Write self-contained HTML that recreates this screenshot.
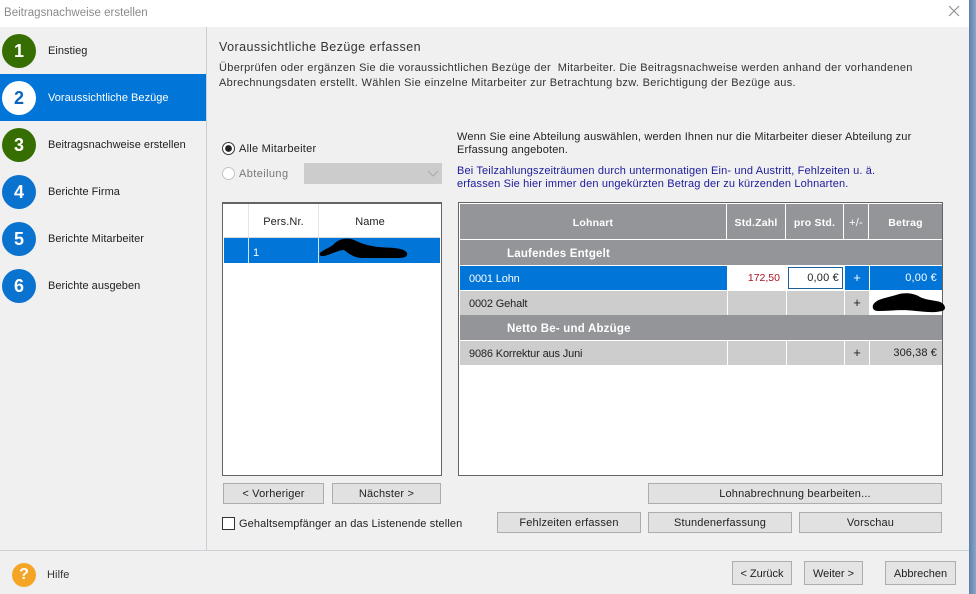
<!DOCTYPE html>
<html lang="de">
<head>
<meta charset="utf-8">
<title>Beitragsnachweise erstellen</title>
<style>
html,body{margin:0;padding:0;}
body{width:976px;height:594px;position:relative;overflow:hidden;background:#f0f0f0;font-family:"Liberation Sans",Arial,sans-serif;font-size:11px;color:#222;}
.a{position:absolute;white-space:nowrap;}
.t{position:absolute;white-space:nowrap;line-height:14px;letter-spacing:.03px;}
.circ{position:absolute;left:2px;width:34px;height:34px;border-radius:50%;color:#fff;text-align:center;font:bold 18px/35px "Liberation Sans",sans-serif;}
.g{background:#366e02;}
.b{background:#0a72cf;}
.btn{position:absolute;box-sizing:border-box;background:#e1e1e1;border:1px solid #adadad;text-align:center;font-size:11px;line-height:20px;letter-spacing:.17px;color:#222;white-space:nowrap;}
.cell{position:absolute;box-sizing:border-box;white-space:nowrap;}
.hd{background:#939598;color:#fff;font-weight:bold;text-align:center;line-height:38px;font-size:10.5px;letter-spacing:.2px;}
.sec{background:#939598;color:#fff;font-weight:bold;font-size:11.5px;letter-spacing:.2px;line-height:29px;padding-left:47px;}
.gr{background:#cdcdcd;}
.row{line-height:27px;padding-left:9px;letter-spacing:-.15px;}
.plus{line-height:24px;text-align:center;font-size:13px;}
</style>
</head>
<body>
<!-- title bar -->
<div class="a" style="left:0;top:0;width:976px;height:27px;background:#fff;"></div>
<div class="t" style="left:4px;top:6px;color:#8a8a8a;font-size:11.5px;letter-spacing:.02px;">Beitragsnachweise erstellen</div>
<svg class="a" style="left:947px;top:4px;" width="14" height="14" viewBox="0 0 14 14"><path d="M2 2L12 12M12 2L2 12" stroke="#888" stroke-width="1" fill="none"/></svg>

<!-- sidebar -->
<div class="a" style="left:206px;top:27px;width:1px;height:523px;background:#c8ced6;"></div>
<div class="a" style="left:0;top:74px;width:206px;height:47px;background:#0275d8;"></div>
<div class="circ g" style="top:34px;">1</div>
<div class="circ" style="top:81px;background:#fff;color:#0a66bd;">2</div>
<div class="circ g" style="top:128px;">3</div>
<div class="circ b" style="top:175px;">4</div>
<div class="circ b" style="top:222px;">5</div>
<div class="circ b" style="top:269px;">6</div>
<div class="t" style="left:48px;top:44px;">Einstieg</div>
<div class="t" style="left:48px;top:91px;color:#fff;">Voraussichtliche Bezüge</div>
<div class="t" style="left:48px;top:138px;">Beitragsnachweise erstellen</div>
<div class="t" style="left:48px;top:185px;">Berichte Firma</div>
<div class="t" style="left:48px;top:232px;">Berichte Mitarbeiter</div>
<div class="t" style="left:48px;top:279px;">Berichte ausgeben</div>

<!-- header text -->
<div class="t" style="left:219px;top:40px;font-size:12.5px;letter-spacing:.45px;color:#333;">Voraussichtliche Bezüge erfassen</div>
<div class="t" style="left:219px;top:61px;letter-spacing:.32px;color:#333;">Überprüfen oder ergänzen Sie die voraussichtlichen Bezüge der&nbsp; Mitarbeiter. Die Beitragsnachweise werden anhand der vorhandenen</div>
<div class="t" style="left:219px;top:76px;letter-spacing:.32px;color:#333;">Abrechnungsdaten erstellt. Wählen Sie einzelne Mitarbeiter zur Betrachtung bzw. Berichtigung der Bezüge aus.</div>

<!-- radios -->
<svg class="a" style="left:221px;top:141px;" width="15" height="15" viewBox="0 0 15 15"><circle cx="7.5" cy="7.5" r="6" fill="#fff" stroke="#333" stroke-width="1"/><circle cx="7.5" cy="7.5" r="3.4" fill="#222"/></svg>
<div class="t" style="left:239px;top:142px;letter-spacing:.25px;">Alle Mitarbeiter</div>
<svg class="a" style="left:221px;top:166px;" width="15" height="15" viewBox="0 0 15 15"><circle cx="7.5" cy="7.5" r="6" fill="#fff" stroke="#c4c4c4" stroke-width="1"/></svg>
<div class="t" style="left:239px;top:167px;color:#777;letter-spacing:.4px;">Abteilung</div>
<div class="a" style="left:304px;top:163px;width:138px;height:21px;background:#ccc;border:0;"></div>
<svg class="a" style="left:427px;top:170px;" width="12" height="8" viewBox="0 0 12 8"><path d="M1 1L6 6L11 1" stroke="#aaa" stroke-width="1" fill="none"/></svg>

<!-- right info -->
<div class="t" style="left:457px;top:130px;letter-spacing:.17px;">Wenn Sie eine Abteilung auswählen, werden Ihnen nur die Mitarbeiter dieser Abteilung zur</div>
<div class="t" style="left:457px;top:143px;letter-spacing:.17px;">Erfassung angeboten.</div>
<div class="t" style="left:457px;top:164px;letter-spacing:.15px;color:#1c1c9c;">Bei Teilzahlungszeiträumen durch untermonatigen Ein- und Austritt, Fehlzeiten u. ä.</div>
<div class="t" style="left:457px;top:177px;letter-spacing:.15px;color:#1c1c9c;">erfassen Sie hier immer den ungekürzten Betrag der zu kürzenden Lohnarten.</div>

<!-- left table -->
<div class="a" style="left:222px;top:202px;width:218px;height:271px;background:#fff;border:1px solid #646464;border-top-width:2px;"></div>
<div class="a" style="left:248px;top:204px;width:1px;height:59px;background:#e4e4e4;"></div>
<div class="a" style="left:318px;top:204px;width:1px;height:59px;background:#e4e4e4;"></div>
<div class="a" style="left:224px;top:237px;width:216px;height:1px;background:#d8d8d8;"></div>
<div class="t" style="left:249px;top:215px;width:69px;text-align:center;letter-spacing:.1px;">Pers.Nr.</div>
<div class="t" style="left:319px;top:215px;width:102px;text-align:center;letter-spacing:.05px;">Name</div>
<div class="a" style="left:224px;top:238px;width:216px;height:25px;background:#0275d8;"></div>
<div class="a" style="left:248px;top:238px;width:1px;height:25px;background:#cfe6fa;"></div>
<div class="a" style="left:318px;top:238px;width:1px;height:25px;background:#cfe6fa;"></div>
<div class="t" style="left:253px;top:246px;color:#fff;">1</div>
<svg class="a" style="left:318px;top:236px;" width="92" height="26" viewBox="0 0 92 26"><path d="M2 17C6 13 12 12 16 8C20 3 30 1 36 4C44 8 52 10 60 11C70 12 86 11 89 17C90 22 84 22 78 22L44 22C36 22 30 17 26 14C20 14 10 20 5 20C2 20 1 19 2 17Z" fill="#000"/></svg>

<div class="btn" style="left:223px;top:483px;width:101px;height:21px;">&lt; Vorheriger</div>
<div class="btn" style="left:332px;top:483px;width:109px;height:21px;">Nächster &gt;</div>
<div class="a" style="left:222px;top:517px;width:11px;height:11px;background:#fff;border:1px solid #333;"></div>
<div class="t" style="left:239px;top:517px;letter-spacing:.12px;">Gehaltsempfänger an das Listenende stellen</div>

<!-- right table -->
<div class="a" style="left:458px;top:202px;width:483px;height:272px;background:#fff;border:1px solid #646464;"></div>
<div class="cell hd" style="left:460px;top:204px;width:266px;height:35px;">Lohnart</div>
<div class="cell hd" style="left:727px;top:204px;width:58px;height:35px;">Std.Zahl</div>
<div class="cell hd" style="left:786px;top:204px;width:57px;height:35px;">pro Std.</div>
<div class="cell hd" style="left:844px;top:204px;width:24px;height:35px;font-weight:normal;font-size:11px;">+/-</div>
<div class="cell hd" style="left:869px;top:204px;width:73px;height:35px;">Betrag</div>

<div class="cell sec" style="left:460px;top:240px;width:482px;height:25px;">Laufendes Entgelt</div>

<div class="cell row" style="left:460px;top:266px;width:267px;height:24px;background:#0275d8;color:#fff;">0001 Lohn</div>
<div class="cell" style="left:728px;top:266px;width:58px;height:24px;background:#fff;color:#a8141e;line-height:25px;text-align:right;padding-right:6px;font-size:10.5px;">172,50</div>
<div class="cell" style="left:788px;top:267px;width:55px;height:22px;background:#fff;border:1px solid #1c5f99;line-height:21px;text-align:right;padding-right:3px;letter-spacing:.2px;">0,00 €</div>
<div class="cell plus" style="left:845px;top:266px;width:24px;height:24px;background:#0275d8;color:#fff;">+</div>
<div class="cell" style="left:870px;top:266px;width:72px;height:24px;background:#0275d8;color:#fff;line-height:25px;text-align:right;padding-right:5px;letter-spacing:.2px;">0,00 €</div>

<div class="cell gr row" style="left:460px;top:291px;width:267px;height:24px;">0002 Gehalt</div>
<div class="cell gr" style="left:728px;top:291px;width:58px;height:24px;"></div>
<div class="cell gr" style="left:787px;top:291px;width:57px;height:24px;"></div>
<div class="cell gr plus" style="left:845px;top:291px;width:24px;height:24px;">+</div>
<div class="cell" style="left:870px;top:291px;width:72px;height:24px;background:#fff;"></div>
<svg class="a" style="left:870px;top:292px;" width="78" height="22" viewBox="0 0 78 22"><path d="M3 13C6 7 16 6 26 3C34 0 44 1 50 5C58 9 68 8 72 11C76 14 76 18 72 19C64 21 56 20 46 19C32 17 20 19 9 19C4 19 2 17 3 13Z" fill="#000"/></svg>

<div class="cell sec" style="left:460px;top:315px;width:482px;height:25px;">Netto Be- und Abzüge</div>

<div class="cell gr row" style="left:460px;top:341px;width:267px;height:24px;">9086 Korrektur aus Juni</div>
<div class="cell gr" style="left:728px;top:341px;width:58px;height:24px;"></div>
<div class="cell gr" style="left:787px;top:341px;width:57px;height:24px;"></div>
<div class="cell gr plus" style="left:845px;top:341px;width:24px;height:24px;">+</div>
<div class="cell gr" style="left:870px;top:341px;width:72px;height:24px;line-height:25px;text-align:right;padding-right:5px;letter-spacing:.1px;">306,38 €</div>

<!-- action buttons -->
<div class="btn" style="left:648px;top:483px;width:294px;height:21px;">Lohnabrechnung bearbeiten...</div>
<div class="btn" style="left:497px;top:512px;width:144px;height:21px;">Fehlzeiten erfassen</div>
<div class="btn" style="left:648px;top:512px;width:144px;height:21px;">Stundenerfassung</div>
<div class="btn" style="left:799px;top:512px;width:143px;height:21px;">Vorschau</div>

<!-- footer -->
<div class="a" style="left:0;top:550px;width:970px;height:1px;background:#cdd0d4;"></div>
<div class="a" style="left:12px;top:563px;width:24px;height:24px;border-radius:50%;background:#f4a526;color:#fff;text-align:center;font:bold 16px/24px 'Liberation Sans',sans-serif;">?</div>
<div class="t" style="left:47px;top:568px;letter-spacing:.1px;color:#333;">Hilfe</div>
<div class="btn" style="left:732px;top:561px;width:60px;height:24px;line-height:24px;letter-spacing:0;background:#e4e4e4;">&lt; Zurück</div>
<div class="btn" style="left:804px;top:561px;width:59px;height:24px;line-height:24px;letter-spacing:0;background:#e4e4e4;">Weiter &gt;</div>
<div class="btn" style="left:885px;top:561px;width:71px;height:24px;line-height:24px;letter-spacing:0;background:#e4e4e4;">Abbrechen</div>

<!-- right edge -->
<div class="a" style="left:969px;top:0;width:7px;height:594px;background:linear-gradient(90deg,#5c80ad,#8aa6c8);"></div>
</body>
</html>
